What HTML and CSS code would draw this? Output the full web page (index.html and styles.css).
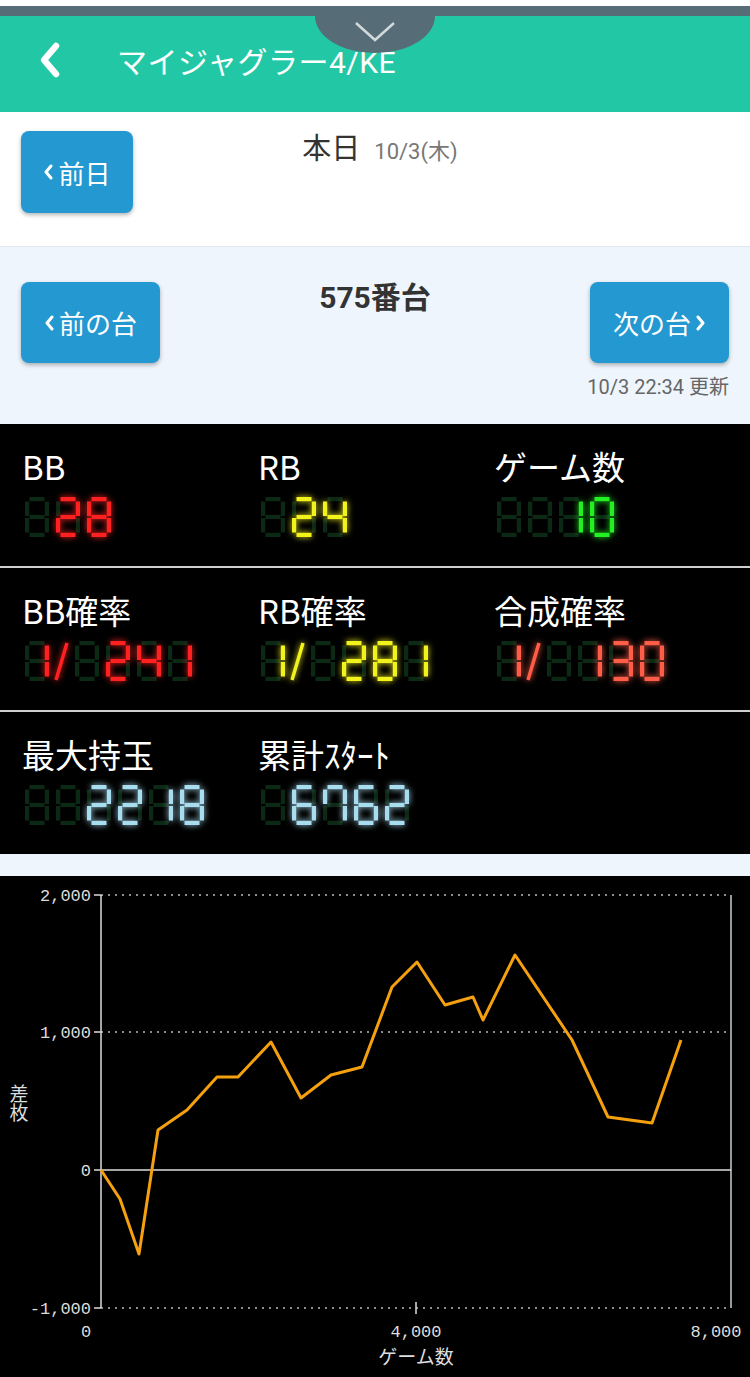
FILE: index.html
```html
<!DOCTYPE html>
<html lang="ja">
<head>
  <meta charset="UTF-8" />
  <meta name="viewport" content="width=device-width, initial-scale=1.0" />
  <title>575番台 - マイジャグラー4/KE</title>
  <link rel="stylesheet" href="styles.css">
</head>
<body>
  <div id="status-strip"></div>
  <header id="app-bar">
    <div class="pull-tab">
      <svg width="120" height="36" viewBox="0 0 120 36"><polyline points="41,7 60,24 79,7" /></svg>
    </div>
    <a class="back" href="#">
      <svg width="26" height="38" viewBox="0 0 26 38"><polyline points="19,5 7,19 19,33" /></svg>
    </a>
    <h1>マイジャグラー4/KE</h1>
  </header>

  <section id="day-nav">
    <button class="nav-btn day"><svg class="chev" width="10" height="16" viewBox="0 0 10 16"><polyline points="8,2 3,8 8,14" /></svg>前日</button>
    <div class="day-title">本日<span>10/3(木)</span></div>
    <div class="spacer"></div>
  </section>

  <section id="machine-nav">
    <div class="machine-row">
      <button class="nav-btn wide"><svg class="chev" width="10" height="16" viewBox="0 0 10 16"><polyline points="8,2 3,8 8,14" /></svg>前の台</button>
      <div class="machine-no">575番台</div>
      <button class="nav-btn wide">次の台<svg class="chev" width="10" height="16" viewBox="0 0 10 16"><polyline points="2,2 7,8 2,14" /></svg></button>
    </div>
    <div class="updated">10/3 22:34 更新</div>
  </section>

  <section id="counters">
    <div class="counter-row">
      <div class="counter"><div class="label">BB</div><svg class="led led-red" data-value=" 28"></svg></div>
      <div class="counter"><div class="label">RB</div><svg class="led led-yellow" data-value=" 24"></svg></div>
      <div class="counter"><div class="label">ゲーム数</div><svg class="led led-green" data-value="  10"></svg></div>
    </div>
    <div class="counter-row">
      <div class="counter"><div class="label">BB確率</div><svg class="led led-red" data-value="1/ 241"></svg></div>
      <div class="counter"><div class="label">RB確率</div><svg class="led led-yellow" data-value="1/ 281"></svg></div>
      <div class="counter"><div class="label">合成確率</div><svg class="led led-orange" data-value="1/ 130"></svg></div>
    </div>
    <div class="counter-row">
      <div class="counter"><div class="label">最大持玉</div><svg class="led led-blue" data-value="  2218"></svg></div>
      <div class="counter"><div class="label">累計ｽﾀｰﾄ</div><svg class="led led-blue" data-value=" 6762"></svg></div>
    </div>
  </section>

  <section id="chart">
    <svg width="750" height="501" viewBox="0 0 750 501">
      <g class="grid">
        <line x1="101" y1="19" x2="731" y2="19" />
        <line x1="101" y1="156" x2="731" y2="156" />
        <line x1="101" y1="432" x2="731" y2="432" />
      </g>
      <line class="axis-right" x1="731" y1="19" x2="731" y2="432" />
      <g class="axis">
        <line x1="101" y1="19" x2="101" y2="432" />
        <line x1="101" y1="294" x2="731" y2="294" />
        <line x1="94" y1="19" x2="101" y2="19" />
        <line x1="94" y1="156" x2="101" y2="156" />
        <line x1="94" y1="294" x2="101" y2="294" />
        <line x1="94" y1="432" x2="101" y2="432" />
        <line x1="416" y1="426" x2="416" y2="438" />
      </g>
      <g class="tick-labels y">
        <text x="91" y="25">2,000</text>
        <text x="91" y="162">1,000</text>
        <text x="91" y="300">0</text>
        <text x="91" y="438">-1,000</text>
      </g>
      <g class="tick-labels x">
        <text x="86" y="461">0</text>
        <text x="416" y="461">4,000</text>
        <text x="716" y="461">8,000</text>
      </g>
      <text class="axis-title" x="416" y="488">ゲーム数</text>
      <text class="axis-title vertical" x="19" y="208">差枚</text>
      <polyline class="series" points="101,294 120,323 139,378 158,254 187,234 217,201 238,201 271,166 301,222 331,199 362,191 392,111 417,86 445,129 473,121 483,144 515,79 572,164 608,241 652,247 681,164" />
    </svg>
  </section>

  <script>
    // segment boxes for one 24x40 digit: x, y, w, h
    const SEGMENTS = {
      a: [4.5, 0, 15, 4.2],
      b: [19.8, 4.5, 4.2, 14.5],
      c: [19.8, 21, 4.2, 14.5],
      d: [4.5, 35.8, 15, 4.2],
      e: [0, 21, 4.2, 14.5],
      f: [0, 4.5, 4.2, 14.5],
      g: [4.5, 17.9, 15, 4.2]
    };
    const DIGITS = {
      '0': 'abcdef', '1': 'bc', '2': 'abdeg', '3': 'abcdg', '4': 'bcfg',
      '5': 'acdfg', '6': 'acdefg', '7': 'abcf', '8': 'abcdefg', '9': 'abcdfg', ' ': ''
    };

    function segRect(seg, x) {
      const [sx, sy, w, h] = SEGMENTS[seg];
      return `<rect x="${x + sx}" y="${sy}" width="${w}" height="${h}"/>`;
    }

    function drawLed(svg) {
      let x = 0, off = '', on = '';
      for (const ch of svg.dataset.value) {
        if (ch === '/') {
          x -= 7;
          on += `<line x1="${x + 7}" y1="39" x2="${x + 18}" y2="2"/>`;
          x += 26;
          continue;
        }
        for (const seg in SEGMENTS) {
          if (DIGITS[ch].includes(seg)) on += segRect(seg, x);
          else off += segRect(seg, x);
        }
        x += 31;
      }
      svg.setAttribute('width', x);
      svg.setAttribute('height', 40);
      svg.innerHTML = `<g class="off">${off}</g><g class="on">${on}</g>`;
    }

    document.querySelectorAll('.led').forEach(drawLed);
  </script>
</body>
</html>
```

FILE: styles.css
```css
body {
  margin: 0;
  background-color: #eef5fc;
  font-family: Roboto, "Noto Sans CJK JP", sans-serif;
  color: #333;
}
#status-strip {
  height: 6px;
  background: #fff;
}
#app-bar {
  position: relative;
  height: 88px;
  background: #22c8a5;
  border-top: 10px solid #566d78;
  display: flex;
  align-items: center;
  padding: 0 0 8px 37px;
  box-sizing: content-box;
}
#app-bar h1 {
  margin: 0 0 0 54px;
  font-size: 30px;
  font-weight: normal;
  color: #fff;
  letter-spacing: 0.5px;
}
.back svg {
  display: block;
}
.back polyline {
  fill: none;
  stroke: #fff;
  stroke-width: 6.5;
  stroke-linecap: round;
  stroke-linejoin: round;
}
.pull-tab {
  position: absolute;
  top: 0;
  left: 50%;
  width: 120px;
  height: 37px;
  margin-left: -60px;
  background: #566d78;
  border-radius: 0 0 50% 50% / 0 0 100% 100%;
  z-index: 2;
}
.pull-tab svg {
  display: block;
}
.pull-tab polyline {
  fill: none;
  stroke: #d3d8db;
  stroke-width: 2.5;
}

.nav-btn {
  display: flex;
  align-items: center;
  justify-content: center;
  gap: 5px;
  border: none;
  border-radius: 8px;
  background: #2398d1;
  color: #fff;
  font-family: Roboto, "Noto Sans CJK JP", sans-serif;
  font-size: 26px;
  box-shadow: 0 2px 4px rgba(0, 0, 0, 0.3);
  padding: 0;
  cursor: pointer;
}
.chev polyline {
  fill: none;
  stroke: #fff;
  stroke-width: 3;
  stroke-linecap: round;
  stroke-linejoin: round;
}
.nav-btn.day {
  width: 112px;
  height: 82px;
}
.nav-btn.wide {
  width: 139px;
  height: 81px;
}

#day-nav {
  display: flex;
  align-items: flex-start;
  background: #fff;
  height: 115px;
  padding: 19px 21px 0;
  border-bottom: 1px solid #dfe6ee;
}
.day-title {
  flex: 1;
  text-align: center;
  font-size: 29px;
  line-height: 34px;
  margin-top: 1px;
  color: #333;
}
.day-title span {
  margin-left: 14px;
  font-size: 22px;
  color: #777;
}
.spacer {
  width: 102px;
}

#machine-nav {
  height: 177px;
  padding: 35px 21px 0;
  box-sizing: border-box;
}
.machine-row {
  display: flex;
  justify-content: space-between;
  align-items: flex-start;
}
.machine-no {
  font-size: 30px;
  font-weight: bold;
  line-height: 34px;
  margin-top: -1px;
  color: #333;
}
.updated {
  text-align: right;
  font-size: 20px;
  color: #666;
  margin-top: 8px;
}

#counters {
  background: #000;
  color: #fff;
}
.counter-row {
  display: grid;
  grid-template-columns: 236px 236px 236px;
  height: 142px;
  padding: 22px 0 0 22px;
  box-sizing: border-box;
}
.counter-row + .counter-row {
  border-top: 2px solid #cfcfcf;
  height: 144px;
}
.label {
  font-family: "Noto Sans CJK JP", sans-serif;
  font-size: 33px;
  line-height: 40px;
}
.led {
  display: block;
  overflow: visible;
  margin: 11px 0 0 3px;
}
.led .off {
  fill: #0c2915;
}
.led .on {
  fill: currentColor;
  filter: drop-shadow(0 0 3px currentColor);
}
.led .on line {
  stroke: currentColor;
  stroke-width: 3.5;
}
.led-red { color: #ff2020; }
.led-yellow { color: #f2f21c; }
.led-green { color: #22f022; }
.led-orange { color: #ff5d48; }
.led-blue { color: #a8dcef; }

#chart {
  margin-top: 22px;
  background: #000;
  height: 501px;
}
#chart svg {
  display: block;
}
.grid line {
  stroke: #bbb;
  stroke-width: 1.5;
  stroke-dasharray: 2 5;
}
.axis line {
  stroke: #ddd;
  stroke-width: 1.5;
}
.axis-right {
  stroke: #999;
  stroke-width: 2;
}
.tick-labels text {
  font-family: "Liberation Mono", monospace;
  font-size: 17px;
  fill: #ddd;
}
.tick-labels.y text {
  text-anchor: end;
}
.tick-labels.x text {
  text-anchor: middle;
}
.axis-title {
  font-family: "Noto Sans CJK JP", sans-serif;
  font-size: 19px;
  fill: #ddd;
  text-anchor: middle;
}
.axis-title.vertical {
  writing-mode: vertical-rl;
  text-anchor: start;
}
.series {
  fill: none;
  stroke: #f5a10f;
  stroke-width: 3;
  stroke-linejoin: round;
}
```
